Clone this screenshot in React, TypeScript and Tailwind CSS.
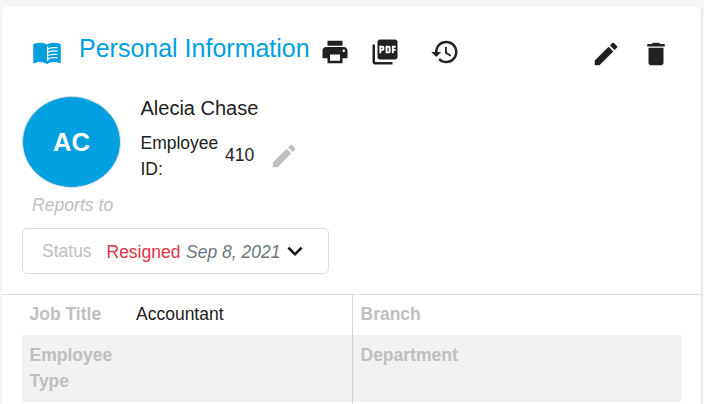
import type { ReactNode } from "react";
import { MdDelete, MdEdit, MdExpandMore, MdHistory, MdPictureAsPdf, MdPrint } from "react-icons/md";

function BookIcon() {
  return (
    <svg viewBox="0 0 24 24" fill="currentColor" className="size-[30px] shrink-0 text-[#009fdf]">
      <path d="M12 21.5C10.65 20.65 8.2 20 6.5 20C4.85 20 3.15 20.3 1.75 21.05C1.65 21.1 1.6 21.1 1.5 21.1C1.25 21.1 1 20.85 1 20.6V6C1.6 5.55 2.25 5.25 3 5C4.11 4.65 5.33 4.5 6.5 4.5C8.45 4.5 10.55 4.9 12 6C13.45 4.9 15.55 4.5 17.5 4.5C18.67 4.5 19.89 4.65 21 5C21.75 5.25 22.4 5.55 23 6V20.6C23 20.85 22.75 21.1 22.5 21.1C22.4 21.1 22.35 21.1 22.25 21.05C20.85 20.3 19.15 20 17.5 20C15.8 20 13.35 20.65 12 21.5" />
      <g fill="none" stroke="white" strokeWidth="1">
        <path d="M12.5 7.6V19.2" />
        <path d="M12.5 9.6C14 8.6 16.5 8.2 20.4 8.6" />
        <path d="M12.5 12.3C14 11.3 16.5 10.9 20.4 11.3" />
        <path d="M12.5 15C14 14 16.5 13.6 20.4 14" />
        <path d="M12.5 17.7C14 16.7 16.5 16.3 20.4 16.7" />
      </g>
    </svg>
  );
}

function Header() {
  return (
    <header className="flex h-[62px] items-start pt-[31px] pl-[30px] text-[#212121]">
      <BookIcon />
      <h1 className="-mt-1 ml-[17px] w-[230px] whitespace-nowrap text-[25px] leading-[31px] text-[#009fdf]">
        Personal Information
      </h1>
      <MdPrint size={30} className="ml-[11px] shrink-0" />
      <MdPictureAsPdf size={30} className="ml-5 shrink-0" />
      <MdHistory size={30} className="ml-[30px] shrink-0" />
      <div className="ml-auto flex gap-5 pt-0.5 pr-[30px]">
        <MdEdit size={30} />
        <MdDelete size={30} />
      </div>
    </header>
  );
}

function Profile() {
  return (
    <section className="flex h-[154px] pt-[28px] pl-5">
      <div className="w-[99px]">
        <div className="flex h-[92px] w-[99px] items-center justify-center rounded-[50%] border border-[#dee2e6] bg-[#009fdf] text-[25.5px] font-bold text-white">
          AC
        </div>
        <p className="mt-[4px] pl-[10px] text-[17.6px] leading-[26px] whitespace-nowrap text-[#bfbfbf] italic">Reports to</p>
      </div>
      <div className="ml-[19.5px] text-[#212121]">
        <p className="text-[20px] leading-6">Alecia Chase</p>
        <div className="mt-[10px] flex items-center text-[17.5px] leading-[26px]">
          <p className="w-[84.5px]">
            Employee
            <br />
            ID:
          </p>
          <span className="-mt-0.5 w-[44px]">410</span>
          <MdEdit size={30} className="text-[#bfbfbf]" />
        </div>
      </div>
    </section>
  );
}

function Status() {
  return (
    <div className="ml-5 mt-1.5 flex h-[46px] w-[307px] items-center rounded-[5px] border border-[#dedede] pl-[19px] text-[17.5px] leading-[26px]">
      <span className="w-[64.5px] text-[#bfbfbf]">Status</span>
      <span className="mt-0.5 w-[79.5px] text-[#dc3545]">Resigned</span>
      <span className="mt-0.5 w-[93.5px] whitespace-nowrap text-[#6c757d] italic">Sep 8, 2021</span>
      <MdExpandMore size={30} className="shrink-0 text-[#111]" />
    </div>
  );
}

function Cell({ label, children }: { label: string; children?: ReactNode }) {
  return (
    <div className="flex pl-[7.5px]">
      <span className="w-[106.5px] font-bold text-[#bfbfbf]">{label}</span>
      <span className="text-[#212121]">{children}</span>
    </div>
  );
}

function Details() {
  return (
    <section className="mt-5 border-t border-[#dedede] px-5 text-[17.5px] leading-[26px]">
      <div className="grid h-10 grid-cols-[330px_1fr]">
        <div className="pt-1.5">
          <Cell label="Job Title">Accountant</Cell>
        </div>
        <div className="border-l border-[#d6d6da] pt-1.5">
          <Cell label="Branch" />
        </div>
      </div>
      <div className="grid h-[67px] grid-cols-[330px_1fr] bg-[#f1f1f1]">
        <div className="pt-[7px]">
          <Cell label="Employee Type" />
        </div>
        <div className="border-l border-[#dccdcf] pt-[7px]">
          <Cell label="Department" />
        </div>
      </div>
      <div className="grid h-10 grid-cols-[330px_1fr]">
        <div />
        <div className="border-l border-[#d6d6da]" />
      </div>
    </section>
  );
}

export default function App() {
  return (
    <div className="h-[404px] w-[704px] overflow-hidden bg-[#f5f6f8] pt-1.5 pl-0.5 font-['Liberation_Sans',Arial,sans-serif]">
      <main className="h-[420px] w-[699px] rounded-md bg-white shadow-[1px_1px_2px_#dcdde3]">
        <Header />
        <Profile />
        <Status />
        <Details />
      </main>
    </div>
  );
}
